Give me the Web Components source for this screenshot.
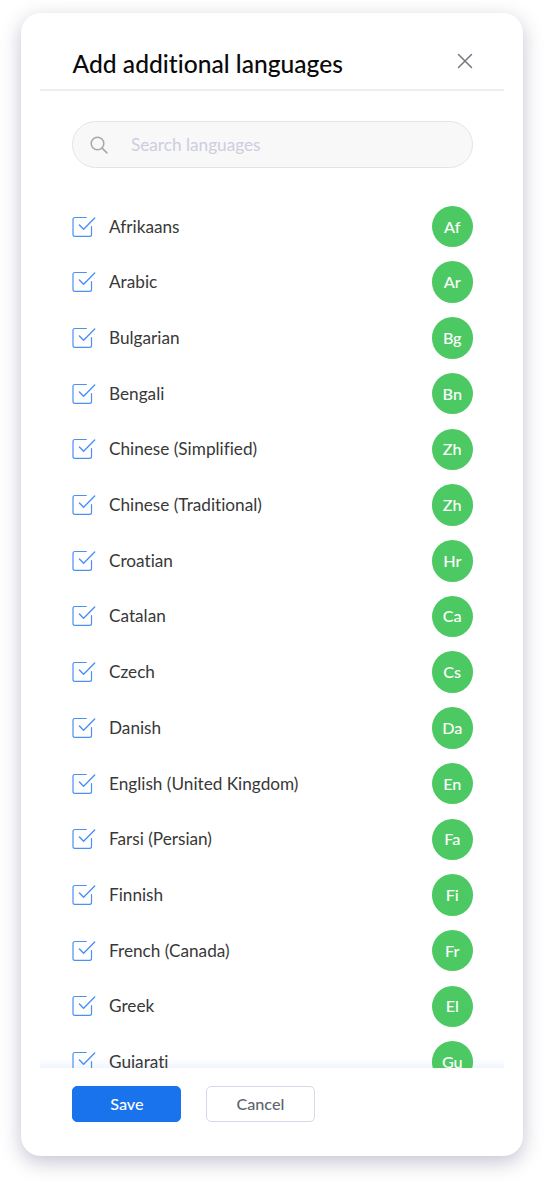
<!DOCTYPE html>
<html lang="en">
<head>
<meta charset="utf-8">
<title>Add additional languages</title>
<style>
  body {
    margin: 0;
    background: #fff;
    font-family: Lato, "Liberation Sans", sans-serif;
    font-variant-ligatures: none;
    color: #383838;
  }
</style>
</head>
<body>
<language-dialog></language-dialog>

<script>
/** Blue box with an overshooting tick. */
class LanguageCheckbox extends HTMLElement {
  constructor() {
    super();
    this.attachShadow({ mode: 'open' });
  }

  connectedCallback() {
    this.shadowRoot.innerHTML = `
      <style>
        :host { display: block; width: 24px; height: 22px; flex: none; }
        svg { display: block; }
      </style>
      <svg width="24" height="22" viewBox="0 0 24 22" fill="none" stroke="#4a90f5" stroke-linecap="round" stroke-linejoin="round">
        <path d="M14.3 1.5H2.9C1.7 1.5 1 2.300 1 3.400v15.100c0 1.2.7 1.9 1.9 1.9h14.700c1.2 0 1.9-.7 1.9-1.9V10.600" stroke-width="1.2"/>
        <path d="M7.4 8.900l4.200 4.300L22.700 1.900" stroke-width="1.4"/>
      </svg>
    `;
  }
}
customElements.define('language-checkbox', LanguageCheckbox);

/** One row: checkbox, language name and its code badge. */
class LanguageRow extends HTMLElement {
  constructor() {
    super();
    this.attachShadow({ mode: 'open' });
  }

  connectedCallback() {
    this.shadowRoot.innerHTML = `
      <style>
        :host {
          display: flex;
          align-items: center;
          height: 55.714px;
          flex: none;
        }
        .name {
          flex: 1;
          margin-left: 13px;
          font-size: 17.2px;
          line-height: 24px;
          white-space: nowrap;
        }
        .badge {
          display: flex;
          align-items: center;
          justify-content: center;
          width: 41.5px;
          height: 41.5px;
          border-radius: 50%;
          background: #4dc964;
          color: #fff;
          font-size: 16.2px;
          font-weight: 500;
          line-height: 24px;
        }
      </style>
      <language-checkbox></language-checkbox>
      <span class="name"><slot></slot></span>
      <span class="badge">${this.getAttribute('code')}</span>
    `;
  }
}
customElements.define('language-row', LanguageRow);

/** Rounded search input with a magnifier. */
class SearchField extends HTMLElement {
  constructor() {
    super();
    this.attachShadow({ mode: 'open' });
  }

  connectedCallback() {
    this.shadowRoot.innerHTML = `
      <style>
        :host {
          display: flex;
          align-items: center;
          box-sizing: border-box;
          height: 47px;
          padding-left: 17px;
          border: 1px solid #e3e4e6;
          border-radius: 24px;
          background: #f8f8f8;
          color: #cdcde0;
          font-size: 17.2px;
          line-height: 24px;
        }
        svg { margin-right: 22.6px; }
      </style>
      <svg width="18" height="18" viewBox="0 0 18 18" fill="none" stroke="#a9a9a9" stroke-width="1.6" stroke-linecap="round">
        <circle cx="7.5" cy="7.5" r="6.3"/>
        <path d="M12.1 12.1l4.8 4.8"/>
      </svg>
      <span><slot></slot></span>
    `;
  }
}
customElements.define('search-field', SearchField);

/** Footer button, outlined unless it is primary. */
class DialogButton extends HTMLElement {
  constructor() {
    super();
    this.attachShadow({ mode: 'open' });
  }

  connectedCallback() {
    this.shadowRoot.innerHTML = `
      <style>
        :host {
          display: block;
          width: 109px;
          height: 36px;
        }
        button {
          display: block;
          width: 100%;
          height: 100%;
          padding: 0;
          border: 1px solid #d3dbe8;
          border-radius: 5px;
          background: #fff;
          color: #60656f;
          font: 500 16.2px/24px Lato, "Liberation Sans", sans-serif;
        }
        :host([primary]) button {
          border-color: #1873ec;
          background: #1873ec;
          color: #fff;
        }
      </style>
      <button type="button"><slot></slot></button>
    `;
  }
}
customElements.define('dialog-button', DialogButton);

const LANGUAGES = [
  ['Af', 'Afrikaans'],
  ['Ar', 'Arabic'],
  ['Bg', 'Bulgarian'],
  ['Bn', 'Bengali'],
  ['Zh', 'Chinese (Simplified)'],
  ['Zh', 'Chinese (Traditional)'],
  ['Hr', 'Croatian'],
  ['Ca', 'Catalan'],
  ['Cs', 'Czech'],
  ['Da', 'Danish'],
  ['En', 'English (United Kingdom)'],
  ['Fa', 'Farsi (Persian)'],
  ['Fi', 'Finnish'],
  ['Fr', 'French (Canada)'],
  ['El', 'Greek'],
  ['Gu', 'Gujarati'],
];

class LanguageDialog extends HTMLElement {
  constructor() {
    super();
    this.attachShadow({ mode: 'open' });
  }

  connectedCallback() {
    this.shadowRoot.innerHTML = `
      <style>
        :host {
          display: block;
          box-sizing: border-box;
          height: 1184px;
          padding: 13px 21px 28px;
          overflow: hidden;
        }
        .card {
          display: flex;
          flex-direction: column;
          box-sizing: border-box;
          height: 1143px;
          padding: 18px 19px 20px;
          border-radius: 20px;
          background: #fff;
          box-shadow: 0 6px 20px rgba(40, 35, 85, 0.27);
        }
        header {
          display: flex;
          align-items: center;
          justify-content: space-between;
          box-sizing: border-box;
          height: 60px;
          padding: 7px 31px 0 32.5px;
          border-bottom: 2px solid #eeeeef;
        }
        h1 {
          margin: 0;
          color: #0a0a0a;
          font-size: 24.6px;
          font-weight: 500;
          line-height: 32px;
          white-space: nowrap;
        }
        .close { margin-bottom: 5px; }
        search-field { margin: 30px 31px 0 32.4px; }
        .list {
          display: flex;
          flex: 1;
          flex-direction: column;
          min-height: 0;
          padding: 30.7px 31px 0 32px;
          overflow: hidden;
          background: linear-gradient(to top, #f0f5fd, rgba(255, 255, 255, 0) 10px);
        }
        footer {
          display: flex;
          gap: 24.5px;
          height: 50px;
          padding: 18px 32.4px 0;
        }
      </style>
      <section class="card" role="dialog" aria-labelledby="title">
        <header>
          <h1 id="title">Add additional languages</h1>
          <svg class="close" width="16" height="16" viewBox="0 0 16 16" stroke="#747780" stroke-width="1.5" stroke-linecap="round">
            <path d="M1.5 1.5l13 13M14.5 1.5l-13 13"/>
          </svg>
        </header>
        <search-field>Search languages</search-field>
        <div class="list">
          ${LANGUAGES.map(([code, name]) => `<language-row code="${code}">${name}</language-row>`).join('')}
        </div>
        <footer>
          <dialog-button primary>Save</dialog-button>
          <dialog-button>Cancel</dialog-button>
        </footer>
      </section>
    `;
  }
}
customElements.define('language-dialog', LanguageDialog);
</script>
</body>
</html>
